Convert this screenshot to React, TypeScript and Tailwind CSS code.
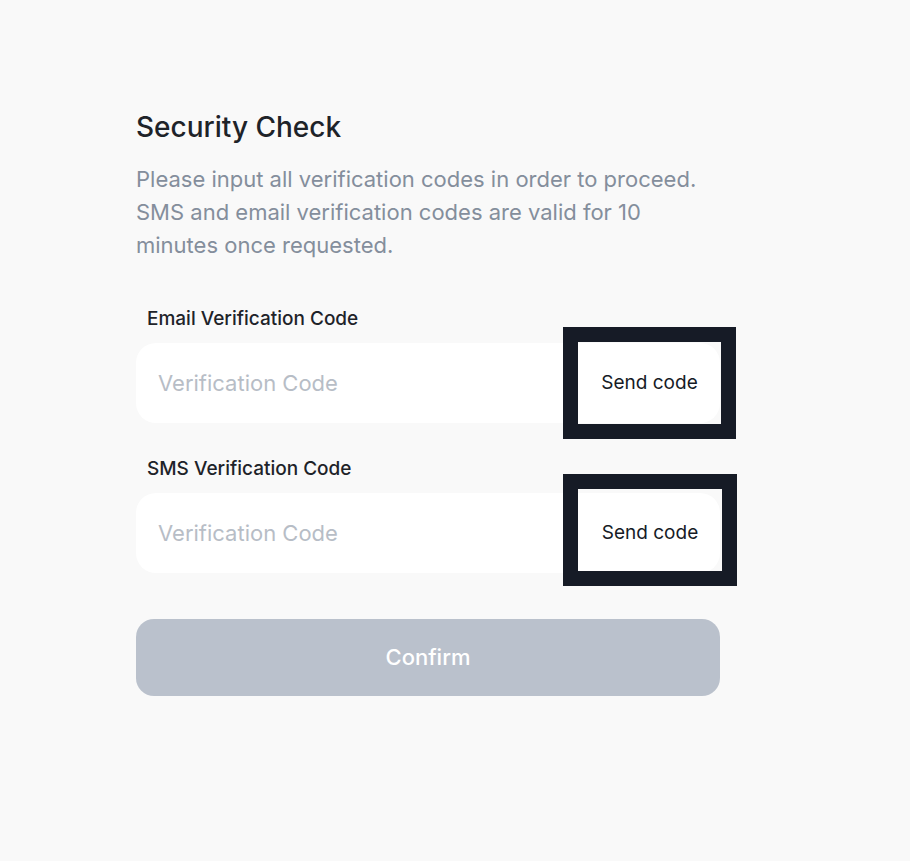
import React from "react";

function CodeField({ label, shift }: { label: string; shift?: boolean }) {
  return (
    <div className="flex flex-col">
      <label className="pl-[11px] text-[19px] font-medium leading-[24px] text-[#1e2329]">{label}</label>
      <div className="relative mt-[12px] flex h-[80px] w-[584px] items-center rounded-[20px] bg-white">
        <input
          className="h-full flex-1 bg-transparent pl-[22px] text-[22px] text-[#1e2329] outline-none placeholder:text-[#b7bdc6]"
          placeholder="Verification Code"
        />
        <button
          className={
            shift
              ? "absolute top-[-4px] right-[-2px] flex h-[82px] w-[144px] items-center justify-center pt-[6px] text-[19px] font-normal text-[#161b26] outline-[15px] outline-solid outline-[#161b26]"
              : "absolute -top-px right-[-1px] flex h-[82px] w-[143px] items-center justify-center text-[19px] font-normal text-[#161b26] outline-[15px] outline-solid outline-[#161b26]"
          }
        >
          Send code
        </button>
      </div>
    </div>
  );
}

export default function App() {
  return (
    <div
      className="min-h-[861px] w-full bg-[#f9f9f9]"
      style={{ fontFamily: "Inter, 'Noto Sans', sans-serif" }}
    >
      <div className="flex flex-col pl-[136px] pt-[109px]">
        <h1 className="text-[28px] font-medium leading-[36px] text-[#1e2329]">Security Check</h1>
        <p className="mt-[18px] w-[580px] text-[22px] leading-[33px] text-[#848e9c]">
          Please input all verification codes in order to proceed. SMS and email verification codes are valid for 10 minutes once requested.
        </p>
        <div className="mt-[45px] flex flex-col gap-[34px]">
          <CodeField label="Email Verification Code" />
          <CodeField label="SMS Verification Code" shift />
        </div>
        <button className="mt-[46px] h-[77px] w-[584px] rounded-[18px] bg-[#bac1cc] text-[22px] font-medium text-white">
          Confirm
        </button>
      </div>
    </div>
  );
}
